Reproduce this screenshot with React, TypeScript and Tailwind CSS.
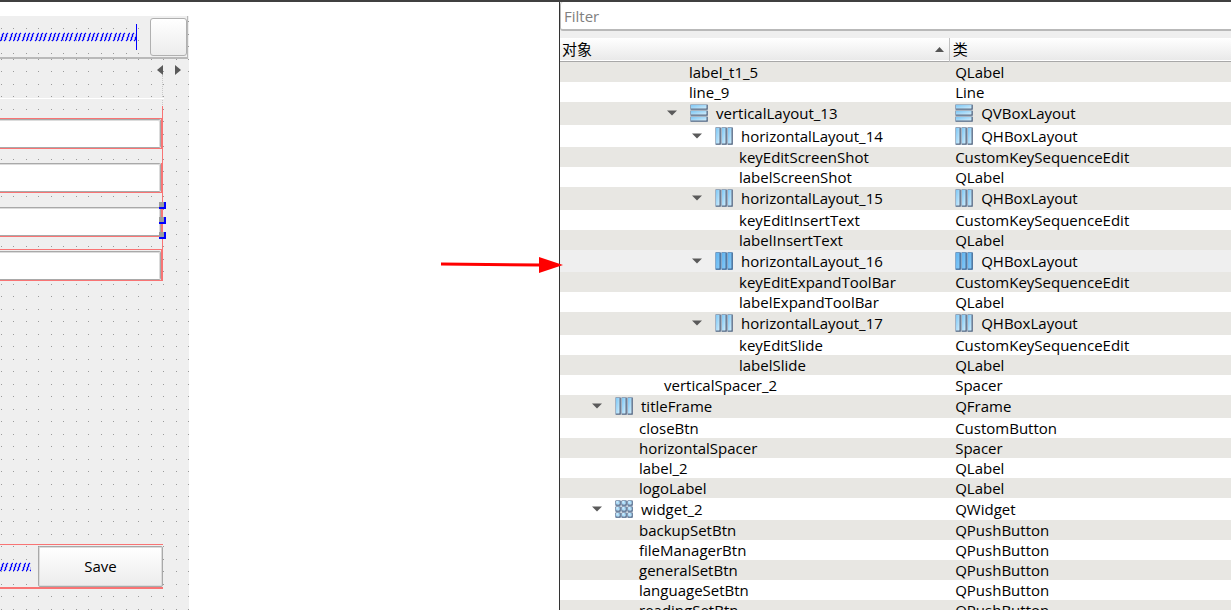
import { useId, useState } from "react";

type IconKind = "hbox" | "hboxActive" | "vbox" | "grid";

type TreeRow = {
  name: string;
  type: string;
  level: number;
  icon?: IconKind;
  active?: boolean;
};

const ROWS: TreeRow[] = [
  { name: "label_t1_5", type: "QLabel", level: 5 },
  { name: "line_9", type: "Line", level: 5 },
  { name: "verticalLayout_13", type: "QVBoxLayout", level: 5, icon: "vbox" },
  { name: "horizontalLayout_14", type: "QHBoxLayout", level: 6, icon: "hbox" },
  { name: "keyEditScreenShot", type: "CustomKeySequenceEdit", level: 7 },
  { name: "labelScreenShot", type: "QLabel", level: 7 },
  { name: "horizontalLayout_15", type: "QHBoxLayout", level: 6, icon: "hbox" },
  { name: "keyEditInsertText", type: "CustomKeySequenceEdit", level: 7 },
  { name: "labelInsertText", type: "QLabel", level: 7 },
  {
    name: "horizontalLayout_16",
    type: "QHBoxLayout",
    level: 6,
    icon: "hboxActive",
    active: true,
  },
  { name: "keyEditExpandToolBar", type: "CustomKeySequenceEdit", level: 7 },
  { name: "labelExpandToolBar", type: "QLabel", level: 7 },
  { name: "horizontalLayout_17", type: "QHBoxLayout", level: 6, icon: "hbox" },
  { name: "keyEditSlide", type: "CustomKeySequenceEdit", level: 7 },
  { name: "labelSlide", type: "QLabel", level: 7 },
  { name: "verticalSpacer_2", type: "Spacer", level: 4 },
  { name: "titleFrame", type: "QFrame", level: 2, icon: "hbox" },
  { name: "closeBtn", type: "CustomButton", level: 3 },
  { name: "horizontalSpacer", type: "Spacer", level: 3 },
  { name: "label_2", type: "QLabel", level: 3 },
  { name: "logoLabel", type: "QLabel", level: 3 },
  { name: "widget_2", type: "QWidget", level: 2, icon: "grid" },
  { name: "backupSetBtn", type: "QPushButton", level: 3 },
  { name: "fileManagerBtn", type: "QPushButton", level: 3 },
  { name: "generalSetBtn", type: "QPushButton", level: 3 },
  { name: "languageSetBtn", type: "QPushButton", level: 3 },
  { name: "readingSetBtn", type: "QPushButton", level: 3 },
];

const INDENT = 25;

const FIELDS = ["Screenshot key", "Insert text key", "Expand toolbar key", "Slide key"];

function LayoutIcon({ kind }: { kind: IconKind }) {
  const id = useId();
  const active = kind === "hboxActive";

  return (
    <svg className="size-[18px] shrink-0" viewBox="0 0 18 18" aria-hidden="true">
      <defs>
        <linearGradient id={id} x1="0" y1="0" x2="1" y2="1">
          <stop offset="0" stopColor={active ? "#5fb2ee" : "#7cc6f4"} />
          <stop offset="1" stopColor={active ? "#86caf8" : "#d0ecfb"} />
        </linearGradient>
      </defs>
      {kind === "grid" &&
        [0, 1, 2].map((row) =>
          [0, 1, 2].map((col) => (
            <g key={`${row}-${col}`}>
              <rect x={col * 6 + 0.2} y={row * 6 + 0.2} width="5.8" height="5.8" rx="1.2" fill="#6d83a0" />
              <rect x={col * 6 + 1} y={row * 6 + 1} width="3.6" height="3.4" rx="0.8" fill={`url(#${id})`} />
              <rect x={col * 6 + 1.3} y={row * 6 + 1.2} width="1.6" height="1.4" fill="#e4f4fd" />
            </g>
          )),
        )}
      {kind === "vbox" &&
        [0, 1, 2].map((i) => (
          <g key={i}>
            <rect x="0" y={i * 6 + 0.2} width="18" height="5.8" rx="1" fill="#93a4b8" />
            <path d={`M1 ${i * 6 + 5}H17V${i * 6 + 1}`} fill="none" stroke="#56677f" strokeWidth="1.2" />
            <rect x="1" y={i * 6 + 1} width="15.4" height="3.4" fill={`url(#${id})`} />
          </g>
        ))}
      {(kind === "hbox" || active) &&
        [0, 1, 2].map((i) => (
          <g key={i}>
            <rect x={i * 6 + 0.2} y="0" width="5.8" height="18" rx="1" fill={active ? "#6f98c0" : "#93a4b8"} />
            <path d={`M${i * 6 + 5} 1V17H${i * 6 + 1}`} fill="none" stroke={active ? "#40658f" : "#56677f"} strokeWidth="1.2" />
            <rect x={i * 6 + 1} y="1" width="3.4" height="15.4" fill={`url(#${id})`} />
          </g>
        ))}
    </svg>
  );
}

function Spring({ className, cap }: { className: string; cap?: boolean }) {
  const id = useId();

  return (
    <svg className={className} aria-hidden="true">
      <defs>
        <pattern id={id} width="13" height="26" patternUnits="userSpaceOnUse">
          {[0, 4, 9].map((x) => (
            <path
              key={x}
              d={`M${x} 16h1v-3h1v-3h1v-1h1v1h-1v3h-1v3h-1v1h-1Z`}
              fill="#0000ff"
              stroke="#0000ff"
              strokeWidth="0.4"
            />
          ))}
        </pattern>
      </defs>
      <rect width="100%" height="26" fill={`url(#${id})`} />
      {cap && (
        <svg x="100%" overflow="visible">
          <rect x="-1" width="1" height="26" fill="#0000ff" />
        </svg>
      )}
    </svg>
  );
}

// Snap grid: one dot every 12/13 px
function DotGrid({ rows }: { rows: [number, number] }) {
  const id = useId();

  return (
    <svg className="pointer-events-none absolute inset-0 size-full" aria-hidden="true">
      <defs>
        <pattern id={id} width="25" height="25" patternUnits="userSpaceOnUse">
          {rows.map((y) => (
            <g key={y} fill="#9a9a9a">
              <rect x="1" y={y} width="1" height="1" />
              <rect x="13" y={y} width="1" height="1" />
            </g>
          ))}
        </pattern>
      </defs>
      <rect width="100%" height="100%" fill={`url(#${id})`} />
    </svg>
  );
}

function SelectionHandles() {
  return (
    <div className="absolute -right-[5px] -top-[5px] flex flex-col gap-2" aria-hidden="true">
      {[0, 1, 2].map((i) => (
        <span key={i} className="size-[7px] border-b-2 border-r-2 border-[#0000ff] bg-[#9c9c9c]" />
      ))}
    </div>
  );
}

function FormCanvas() {
  return (
    <div className="relative mt-[14px] flex w-[189px] shrink-0 flex-col bg-[#efefef]">
      <DotGrid rows={[18, 5]} />

      <div className="relative mr-px flex h-[43px] items-start justify-end border-b-2 border-r border-[#b9b9b9] bg-[#efefef] pt-0.5">
        <DotGrid rows={[12, 24]} />
        <Spring className="relative mt-1.5 h-[26px] w-0 flex-1" cap />
        <button
          type="button"
          aria-label="Close"
          className="relative ml-[13px] h-[38px] w-[37px] shrink-0 rounded-[3px] border border-[#b0b0b0] bg-linear-to-b from-white to-[#ececec]"
        />
      </div>

      <div className="relative flex h-[39px] items-start justify-end gap-3 pr-2 pt-1.5">
        <button type="button" aria-label="Scroll left">
          <svg className="h-[10px] w-[6px]" viewBox="0 0 6 10">
            <path d="M6 0V10L0 5Z" fill="#5a5a5a" />
          </svg>
        </button>
        <button type="button" aria-label="Scroll right">
          <svg className="h-[10px] w-[6px]" viewBox="0 0 6 10">
            <path d="M0 0V10L6 5Z" fill="#5a5a5a" />
          </svg>
        </button>
        <span className="absolute right-[26px] top-4 h-8 border-r border-dotted border-[#c8c8c8]" />
      </div>
      <div className="relative mr-[25px] h-px bg-white" />

      <div className="relative mr-[26px] mt-[7px] flex flex-col gap-[14px] border-r border-[#f87474] pt-3">
        {FIELDS.map((label, index) => (
          <div
            key={label}
            className="relative border-b border-r border-[#f87474] first:border-t last:-mt-0.5 last:border-t last:pt-px"
          >
            <input
              aria-label={label}
              className="block h-[29px] w-full rounded-r-[2px] border-y border-r border-[#a9a9a9] bg-white px-2 shadow-[inset_-1px_1px_0_#dcdcdc] outline-none"
            />
            {index === 2 && <SelectionHandles />}
          </div>
        ))}
      </div>

      <div className="relative mb-[21px] mr-[26px] mt-auto flex items-center border-b-2 border-t border-[#f87474] pt-px">
        <Spring className="h-[26px] w-[31px] shrink-0" />
        <button
          type="button"
          className="ml-[7px] h-[41px] flex-1 rounded-[2px] border border-[#a9a9a9] bg-linear-to-b from-white to-[#ececec] text-[15px] text-black shadow-[inset_0_0_0_1px_#dcdcdc]"
        >
          Save
        </button>
      </div>
    </div>
  );
}

function ObjectTree() {
  const [filter, setFilter] = useState("");

  const rows = ROWS.filter((row) =>
    row.name.toLowerCase().includes(filter.toLowerCase()),
  );

  return (
    <section className="flex min-w-0 flex-col overflow-hidden border-l border-[#333] bg-[#efefef]">
      <input
        type="text"
        aria-label="Filter"
        placeholder="Filter"
        value={filter}
        onChange={(e) => setFilter(e.target.value)}
        className="h-[29px] shrink-0 rounded-l-[3px] border-b-2 border-l border-[#b9b9b9] bg-white px-[3px] text-[15px] outline-none placeholder:text-[#808080]"
      />

      <table className="mt-[7px] w-full table-fixed border-collapse bg-white text-left text-[15px] leading-5">
        <thead>
          <tr className="h-[23px] border-b border-[#a8a8a8] bg-linear-to-b from-white to-[#e9e9e9]">
            <th className="w-[58%] border-r border-[#c0c0c0] p-0 font-normal">
              <div className="flex items-center justify-between pl-0.5 pr-[5px]">
                对象
                <svg className="h-[5px] w-[9px]" viewBox="0 0 9 5" aria-hidden="true">
                  <path d="M0 5H9L4.5 0Z" fill="#555" />
                </svg>
              </div>
            </th>
            <th className="p-0 pl-[3px] font-normal">类</th>
          </tr>
        </thead>
        <tbody>
          {rows.map((row, index) => {
            const iconHeight = index % 2 === 0 ? "h-[23px]" : "h-[22px]";

            return (
              <tr
                key={row.name}
                className={row.active ? "bg-[#efefef]" : "odd:bg-[#e8e7e3] even:bg-white"}
              >
                <td className="p-0">
                  <div
                    className={`flex items-center ${row.icon ? iconHeight : "h-5"}`}
                    style={{ paddingLeft: row.level * INDENT }}
                  >
                    {row.icon ? (
                      <>
                        <button type="button" aria-label={`Collapse ${row.name}`} className="-ml-[18px] mr-[13px] w-[10px]">
                          <svg className="h-[6px] w-[10px]" viewBox="0 0 10 6">
                            <path d="M0 .5H10L5 5.5Z" fill="#5a5a5a" />
                          </svg>
                        </button>
                        <LayoutIcon kind={row.icon} />
                        <span className="pl-2">{row.name}</span>
                      </>
                    ) : (
                      <span className="pl-1">{row.name}</span>
                    )}
                  </div>
                </td>
                <td className="p-0 pl-1.5">
                  {row.icon && row.name.includes("Layout") ? (
                    <div className="flex items-center gap-2">
                      <LayoutIcon kind={row.icon} />
                      {row.type}
                    </div>
                  ) : (
                    row.type
                  )}
                </td>
              </tr>
            );
          })}
        </tbody>
      </table>
    </section>
  );
}

export default function App() {
  return (
    <div className="flex h-screen flex-col overflow-hidden bg-white font-['Open_Sans','Noto_Sans_CJK_SC',sans-serif] text-black">
      <div className="h-0.5 shrink-0 bg-[#404040]" />
      <main className="grid min-h-0 flex-1 grid-cols-[559fr_672fr]">
        <section className="relative flex min-h-0">
          <FormCanvas />
          <svg
            className="absolute -right-1 top-[254px] z-10 h-[18px] w-[123px]"
            viewBox="0 0 123 18"
            aria-hidden="true"
          >
            <path d="M1 8L100 9" stroke="#ff0000" strokeWidth="3" />
            <path d="M99 1L123 9L99 17Z" fill="#ff0000" />
          </svg>
        </section>
        <ObjectTree />
      </main>
    </div>
  );
}
